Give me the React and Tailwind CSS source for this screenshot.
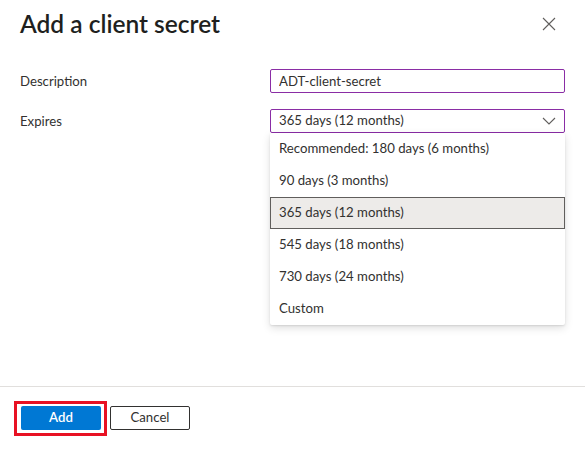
import React, { useState } from 'react';

const options = [
    'Recommended: 180 days (6 months)',
    '90 days (3 months)',
    '365 days (12 months)',
    '545 days (18 months)',
    '730 days (24 months)',
    'Custom',
];

export default function App() {
    const [desc, setDesc] = useState('ADT-client-secret');
    const [expires, setExpires] = useState('365 days (12 months)');

    return (
        <div className="w-[585px] h-[449px] bg-white flex flex-col text-[#323130] font-['Segoe_UI','Lato',sans-serif]">
            {/* header */}
            <div className="flex justify-between items-start pl-[20px] pr-[29px] pt-[8px]">
                <h1 className="text-[24.5px] leading-[32px] font-semibold text-[#201f1e]">Add a client secret</h1>
                <button className="mt-[9px] text-[#605e5c]">
                    <svg width="14" height="14" viewBox="0 0 14 14">
                        <path d="M1 1 L13 13 M13 1 L1 13" stroke="currentColor" strokeWidth="1.1" fill="none" />
                    </svg>
                </button>
            </div>

            {/* form */}
            <div className="grid grid-cols-[250px_295px] gap-y-[16px] pl-[20px] mt-[29px] text-[13.2px]">
                <label className="leading-[24px]">Description</label>
                <input
                    value={desc}
                    onChange={(e) => setDesc(e.target.value)}
                    className="h-[24px] border border-[#8a2da5] rounded-[2px] px-[8px] outline-none"
                />
                <label className="leading-[24px]">Expires</label>
                <div className="relative">
                    <div className="h-[24px] border border-[#8a2da5] rounded-[2px] pl-[8px] pr-[8px] flex items-center justify-between">
                        <span>{expires}</span>
                        <svg width="14" height="8" viewBox="0 0 14 8" className="text-[#605e5c]">
                            <path d="M1 1 L7 7 L13 1" stroke="currentColor" strokeWidth="1.1" fill="none" />
                        </svg>
                    </div>
                    <div className="absolute left-0 top-[24px] w-[295px] bg-white rounded-[2px] shadow-[0_3px_8px_rgba(0,0,0,0.13),0_1px_2px_rgba(0,0,0,0.1)] z-10">
                        {options.map(o => (
                            <button
                                key={o}
                                onClick={() => setExpires(o)}
                                className={`w-full h-[32px] text-left pl-[8px] border ${o === expires ? 'bg-[#edebe9] border-[#605e5c]' : 'border-transparent'}`}
                            >
                                {o}
                            </button>
                        ))}
                    </div>
                </div>
            </div>

            <div className="flex-1" />

            {/* footer */}
            <div className="border-t border-[#e1dfdd] h-[63px] flex items-center pl-[14px] gap-[3px] text-[13.2px]">
                <div className="border-[3px] border-[#e81123] pt-[2px] pl-[4px] pr-[3px] pb-[3px]">
                    <button className="w-[80px] h-[24px] bg-[#0078d4] text-white rounded-[2px] font-semibold">Add</button>
                </div>
                <button className="w-[80px] h-[24px] border border-[#323130] rounded-[2px]">Cancel</button>
            </div>
        </div>
    );
}
